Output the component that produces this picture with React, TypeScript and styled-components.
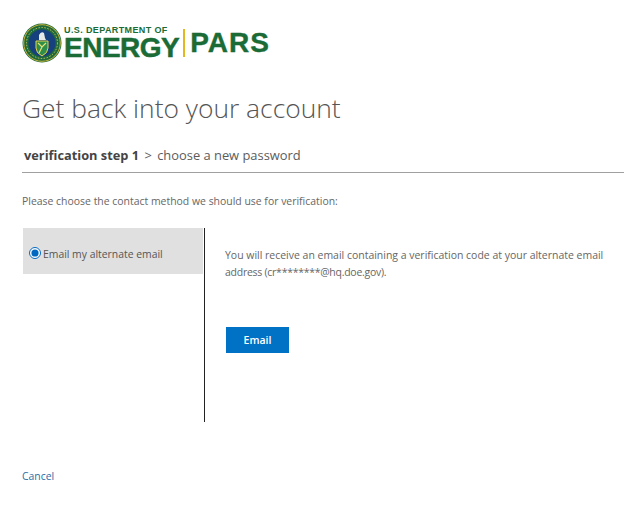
import React from "react";
import styled, { createGlobalStyle } from "styled-components";

const Global = createGlobalStyle`
  html, body { margin: 0; padding: 0; background: #fff; }
  body { font-family: "Open Sans", "Noto Sans", sans-serif; color: #5e5e5e; }
`;

const Page = styled.div`
  width: 624px;
  height: 525px;
  overflow: hidden;
  padding: 23px 0 0 22px;
  box-sizing: border-box;
  display: flex;
  flex-direction: column;
`;

const Logo = styled.div`
  display: flex;
  align-items: flex-start;
  height: 40px;
`;

const SealBox = styled.svg`
  width: 40px;
  height: 40px;
  flex: none;
`;

const Wordmark = styled.div`
  display: flex;
  flex-direction: column;
  margin: 2px 0 0 2px;
  color: #1a6b35;
  font-family: "Liberation Sans", Arial, sans-serif;
  font-weight: 700;
`;

const DeptLine = styled.span`
  font-size: 9px;
  line-height: 10px;
  letter-spacing: 0.38px;
  white-space: nowrap;
`;

const EnergyLine = styled.span`
  font-size: 28px;
  line-height: 22px;
  letter-spacing: -0.5px;
  white-space: nowrap;
  margin-top: 2px;
  -webkit-text-stroke: 0.5px #1a6b35;
`;

const Divider = styled.div`
  width: 2px;
  height: 28px;
  background: #e3b71f;
  margin: 6px 5px 0 4px;
`;

const Pars = styled.span`
  font-family: "Liberation Sans", Arial, sans-serif;
  font-weight: 700;
  font-size: 28px;
  line-height: 22px;
  color: #1a6b35;
  margin-top: 9px;
  letter-spacing: 1px;
  -webkit-text-stroke: 0.4px #1a6b35;
`;

const Title = styled.h1`
  margin: 26px 0 0;
  font-size: 26.4px;
  line-height: 38px;
  font-weight: 300;
  color: #555;
  font-family: "Open Sans", sans-serif;
  white-space: nowrap;
`;

const Steps = styled.div`
  margin-top: 19px;
  padding: 0 0 8px 2px;
  border-bottom: 1px solid #a0a0a0;
  font-size: 12.9px;
  line-height: 18px;
  color: #5c5c5c;
  white-space: nowrap;
`;

const Current = styled.strong`
  font-weight: 700;
  font-size: 12.8px;
  color: #444;
`;

const StepArrow = styled.span`
  margin: 0 2px;
`;

const Prompt = styled.p`
  margin: 20px 0 0;
  font-size: 10.45px;
  line-height: 17px;
  color: #666;
  white-space: nowrap;
`;

const Columns = styled.div`
  display: flex;
  margin-top: 18px;
  height: 194px;
`;

const Methods = styled.div`
  width: 181px;
  margin-left: 1px;
  flex: none;
  border-right: 1px solid #222;
`;

const Method = styled.label`
  display: flex;
  align-items: center;
  width: 180px;
  height: 46px;
  background: #e0e0e0;
  font-size: 10.4px;
  color: #555;
  padding: 5px 0 0 6px;
  box-sizing: border-box;
  white-space: nowrap;
`;

const Radio = styled.input`
  width: 12px;
  height: 12px;
  margin: 0 2px 2px 0;
  accent-color: #0067c0;
`;

const Detail = styled.div`
  padding: 19px 0 0 20px;
  width: 396px;
`;

const DetailLine = styled.p<{ $tight?: boolean }>`
  margin: 0;
  font-size: 10.47px;
  line-height: 17px;
  color: #666;
  white-space: nowrap;
  letter-spacing: ${(p) => (p.$tight ? "-0.25px" : "0")};
`;

const EmailButton = styled.button`
  display: block;
  margin: 46px 0 0 1px;
  width: 63px;
  height: 26px;
  border: none;
  background: #0072c6;
  color: #fff;
  font-family: inherit;
  font-size: 10.5px;
  font-weight: 600;
  padding: 0;
`;

const Cancel = styled.a`
  margin-top: 47px;
  font-size: 10.4px;
  line-height: 14px;
  color: #2a6ea8;
  text-decoration: none;
`;

const Seal = () => (
  <SealBox viewBox="0 0 40 40" aria-hidden="true">
    <circle cx="20" cy="20" r="19.5" fill="#1f6a3a" />
    <circle cx="20" cy="20" r="18.3" fill="none" stroke="#c9b43a" strokeWidth="1" />
    <circle cx="20" cy="20" r="13.5" fill="#17407f" />
    <circle cx="20" cy="20" r="15.5" fill="none" stroke="#c9c266" strokeWidth="1" strokeDasharray="1.5 1.5" />
    <path d="M14 18 H26 V25 Q26 30 20 33 Q14 30 14 25 Z" fill="#2f8f4a" stroke="#e5d24e" strokeWidth="1" />
    <path d="M16 20 L20 24 L24 20 M20 24 L17 30" fill="none" stroke="#e6e27a" strokeWidth="1.2" />
    <path d="M17 12 Q19 8 22 10 L23 15 L24 17 H17 Z" fill="#e9e9e6" />
  </SealBox>
);

export default function App() {
  return (
    <Page>
      <Global />
      <Logo>
        <Seal />
        <Wordmark>
          <DeptLine>U.S. DEPARTMENT OF</DeptLine>
          <EnergyLine>ENERGY</EnergyLine>
        </Wordmark>
        <Divider />
        <Pars>PARS</Pars>
      </Logo>
      <Title>Get back into your account</Title>
      <Steps>
        <Current>verification step 1</Current> <StepArrow>&gt;</StepArrow> choose a new password
      </Steps>
      <Prompt>Please choose the contact method we should use for verification:</Prompt>
      <Columns>
        <Methods>
          <Method>
            <Radio type="radio" name="method" defaultChecked />
            Email my alternate email
          </Method>
        </Methods>
        <Detail>
          <DetailLine>You will receive an email containing a verification code at your alternate email</DetailLine>
          <DetailLine $tight>address (cr********@hq.doe.gov).</DetailLine>
          <EmailButton>Email</EmailButton>
        </Detail>
      </Columns>
      <Cancel href="#">Cancel</Cancel>
    </Page>
  );
}
